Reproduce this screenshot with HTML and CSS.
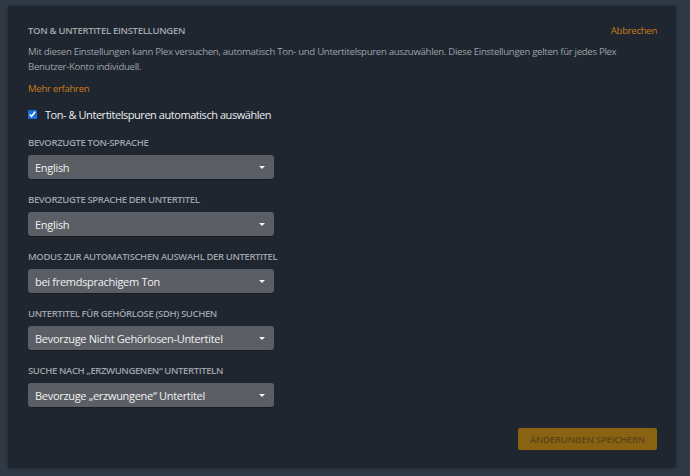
FILE: index.html
```html
<!DOCTYPE html>
<html lang="de">

<head>
  <meta charset="UTF-8" />
  <meta name="viewport" content="width=device-width, initial-scale=1.0" />
  <title>Ton &amp; Untertitel</title>
  <link rel="stylesheet" href="styles.css">
</head>

<body>
  <div class="panel">
    <div class="panel-head">
      <h2 class="panel-title">Ton &amp; Untertitel Einstellungen</h2>
      <a class="link" href="#">Abbrechen</a>
    </div>
    <p class="desc">Mit diesen Einstellungen kann Plex versuchen, automatisch Ton- und Untertitelspuren auszuwählen. Diese Einstellungen gelten für jedes Plex Benutzer-Konto individuell.</p>
    <a class="link more" href="#">Mehr erfahren</a>

    <label class="check-row">
      <input type="checkbox" checked />
      <span>Ton- &amp; Untertitelspuren automatisch auswählen</span>
    </label>

    <div class="field">
      <div class="field-label">Bevorzugte Ton-Sprache</div>
      <div class="select"><span>English</span><i class="caret"></i></div>
    </div>
    <div class="field">
      <div class="field-label">Bevorzugte Sprache der Untertitel</div>
      <div class="select"><span>English</span><i class="caret"></i></div>
    </div>
    <div class="field">
      <div class="field-label">Modus zur automatischen Auswahl der Untertitel</div>
      <div class="select"><span>bei fremdsprachigem Ton</span><i class="caret"></i></div>
    </div>
    <div class="field">
      <div class="field-label">Untertitel für Gehörlose (SDH) suchen</div>
      <div class="select"><span>Bevorzuge Nicht Gehörlosen-Untertitel</span><i class="caret"></i></div>
    </div>
    <div class="field">
      <div class="field-label">Suche nach „erzwungenen“ Untertiteln</div>
      <div class="select"><span>Bevorzuge „erzwungene“ Untertitel</span><i class="caret"></i></div>
    </div>

    <div class="panel-foot">
      <button class="save" disabled>Änderungen speichern</button>
    </div>
  </div>
</body>

</html>
```

FILE: styles.css
```css
html,
body {
  height: 100%;
}

body {
  margin: 0;
  padding: 6px 14px 8px 8px;
  box-sizing: border-box;
  background-color: #2f3945;
  font-family: "Open Sans", "Noto Sans", sans-serif;
  letter-spacing: -0.3px;
  color: #9ea2a8;
}

.panel {
  background-color: #1f2630;
  padding: 18px 19px 18px 20px;
  box-shadow: 0 0 3px rgba(0, 0, 0, 0.35);
  height: 100%;
  box-sizing: border-box;
}

.panel-head {
  display: flex;
  justify-content: space-between;
  align-items: center;
  height: 14px;
}

.panel-title {
  margin: 0;
  font-size: 9.5px;
  font-weight: 600;
  line-height: 14px;
  text-transform: uppercase;
  color: #a3a6ab;
}

.link {
  color: #cc7b19;
  font-size: 9.6px;
  line-height: 14px;
  text-decoration: none;
}

.desc {
  margin: 6px 0 0;
  font-size: 9.6px;
  line-height: 15px;
  color: #9da1a7;
}

.more {
  display: block;
  margin-top: 7px;
  line-height: 15px;
}

.check-row {
  display: flex;
  align-items: center;
  gap: 8px;
  margin-top: 9px;
  height: 18px;
  font-size: 11px;
  letter-spacing: -0.45px;
  color: #eceef0;
}

.check-row input {
  width: 9px;
  height: 9px;
  margin: 0;
  accent-color: #1a6fe0;
}

.field {
  margin-top: 13px;
}

.field + .field {
  margin-top: 14px;
}

.field-label {
  font-size: 9.5px;
  font-weight: 600;
  line-height: 14px;
  letter-spacing: -0.38px;
  text-transform: uppercase;
  color: #9ea2a8;
}

.select {
  display: flex;
  align-items: center;
  justify-content: space-between;
  width: 246px;
  height: 24px;
  margin-top: 5px;
  padding: 0 9px 0 7px;
  box-sizing: border-box;
  background-color: #5b5e64;
  border-radius: 3px;
  box-shadow: 0 1px 0 rgba(0, 0, 0, 0.25);
  font-size: 11px;
  color: #f0f1f2;
}

.caret {
  width: 0;
  height: 0;
  border-left: 3px solid transparent;
  border-right: 3px solid transparent;
  border-top: 3px solid #f4f4f4;
}

.panel-foot {
  display: flex;
  justify-content: flex-end;
  margin-top: 21px;
}

.save {
  width: 139px;
  height: 22px;
  padding: 0;
  border: 0;
  border-radius: 2px;
  background-color: #8a6312;
  color: #5c4516;
  font-family: inherit;
  font-size: 9.5px;
  font-weight: 600;
  letter-spacing: -0.25px;
  text-transform: uppercase;
}
```
